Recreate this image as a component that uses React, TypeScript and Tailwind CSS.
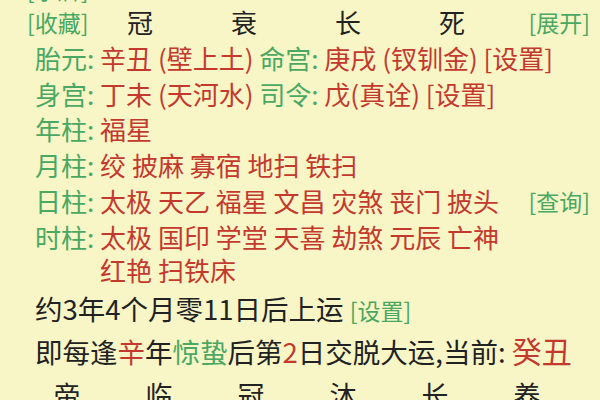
import React from 'react';

const G = 'text-[#4aa862]';
const R = 'text-[#c4392e]';
const K = 'text-[#222222]';

function Label({ children }: { children: React.ReactNode }) {
  return <span className={G}>{children}</span>;
}

export default function App() {
  const head = ['冠', '衰', '长', '死'];
  const foot = ['帝', '临', '冠', '沐', '长', '养'];

  return (
    <div
      className="w-[600px] h-[400px] overflow-hidden bg-[#f8f6c6] text-[26px]"
      style={{ fontFamily: '"Noto Sans CJK SC", "Noto Sans", sans-serif' }}
    >
      <div className="flex flex-col mt-[-28px]">
        {/* top row (cut off) */}
        <div className="h-[32px] leading-[34px] pl-[27px] text-[23px]">
          <Label>[字牌]</Label>
        </div>

        {/* header */}
        <div className="flex items-center h-[36px] leading-[36px] pl-[27px] pr-[10px]">
          <span className={`${G} w-[61px] whitespace-nowrap text-[23px]`}>[收藏]</span>
          {head.map((c, i) => (
            <span key={i} className={`${K} w-[104px] text-center`}>
              {c}
            </span>
          ))}
          <span className={`${G} ml-auto text-[23px]`}>[展开]</span>
        </div>

        <div className="pl-[35px] flex flex-col">
          <div className="h-[36px] leading-[36px] whitespace-nowrap">
            <Label>胎元: </Label>
            <span className={R}>辛丑 (壁上土) </span>
            <Label>命宫: </Label>
            <span className={R}>庚戌 (钗钏金) [设置]</span>
          </div>
          <div className="h-[35px] leading-[35px] whitespace-nowrap">
            <Label>身宫: </Label>
            <span className={R}>丁未 (天河水) </span>
            <Label>司令: </Label>
            <span className={R}>戊(真诠) [设置]</span>
          </div>
          <div className="h-[35px] leading-[35px]">
            <Label>年柱: </Label>
            <span className={R}>福星</span>
          </div>
          <div className="h-[37px] leading-[37px]">
            <Label>月柱: </Label>
            <span className={R}>绞 披麻 寡宿 地扫 铁扫</span>
          </div>
          <div className="flex items-center h-[36px] leading-[36px] pr-[10px] whitespace-nowrap">
            <Label>日柱:&nbsp;</Label>
            <span className={R}>太极 天乙 福星 文昌 灾煞 丧门 披头</span>
            <span className={`${G} ml-auto text-[23px]`}>[查询]</span>
          </div>
          <div className="flex h-[36px] leading-[36px] whitespace-nowrap">
            <Label>时柱:&nbsp;</Label>
            <span className={R}>太极 国印 学堂 天喜 劫煞 元辰 亡神</span>
          </div>
          <div className="h-[30px] leading-[30px]">
            <span className="invisible">时柱:&nbsp;</span>
            <span className={R}>红艳 扫铁床</span>
          </div>
          <div className={`h-[42px] leading-[42px] mt-[2px] ${K} text-[27.5px] whitespace-nowrap`}>
            约3年4个月零11日后上运 <span className={`${G} text-[23px]`}>[设置]</span>
          </div>
          <div className={`h-[42px] leading-[42px] ${K} text-[27.5px] whitespace-nowrap`}>
            即每逢<span className={R}>辛</span>年<span className={G}>惊蛰</span>后第
            <span className={R}>2</span>日交脱大运,当前:{' '}
            <span className={`${R} text-[30px]`}>癸丑</span>
          </div>
        </div>

        {/* bottom row (cut off) */}
        <div className="flex h-[42px] leading-[42px] mt-[3px] pl-[21px] text-[27px]">
          {foot.map((c, i) => (
            <span key={i} className={`${K} w-[92px] text-center`}>
              {c}
            </span>
          ))}
        </div>
      </div>
    </div>
  );
}
